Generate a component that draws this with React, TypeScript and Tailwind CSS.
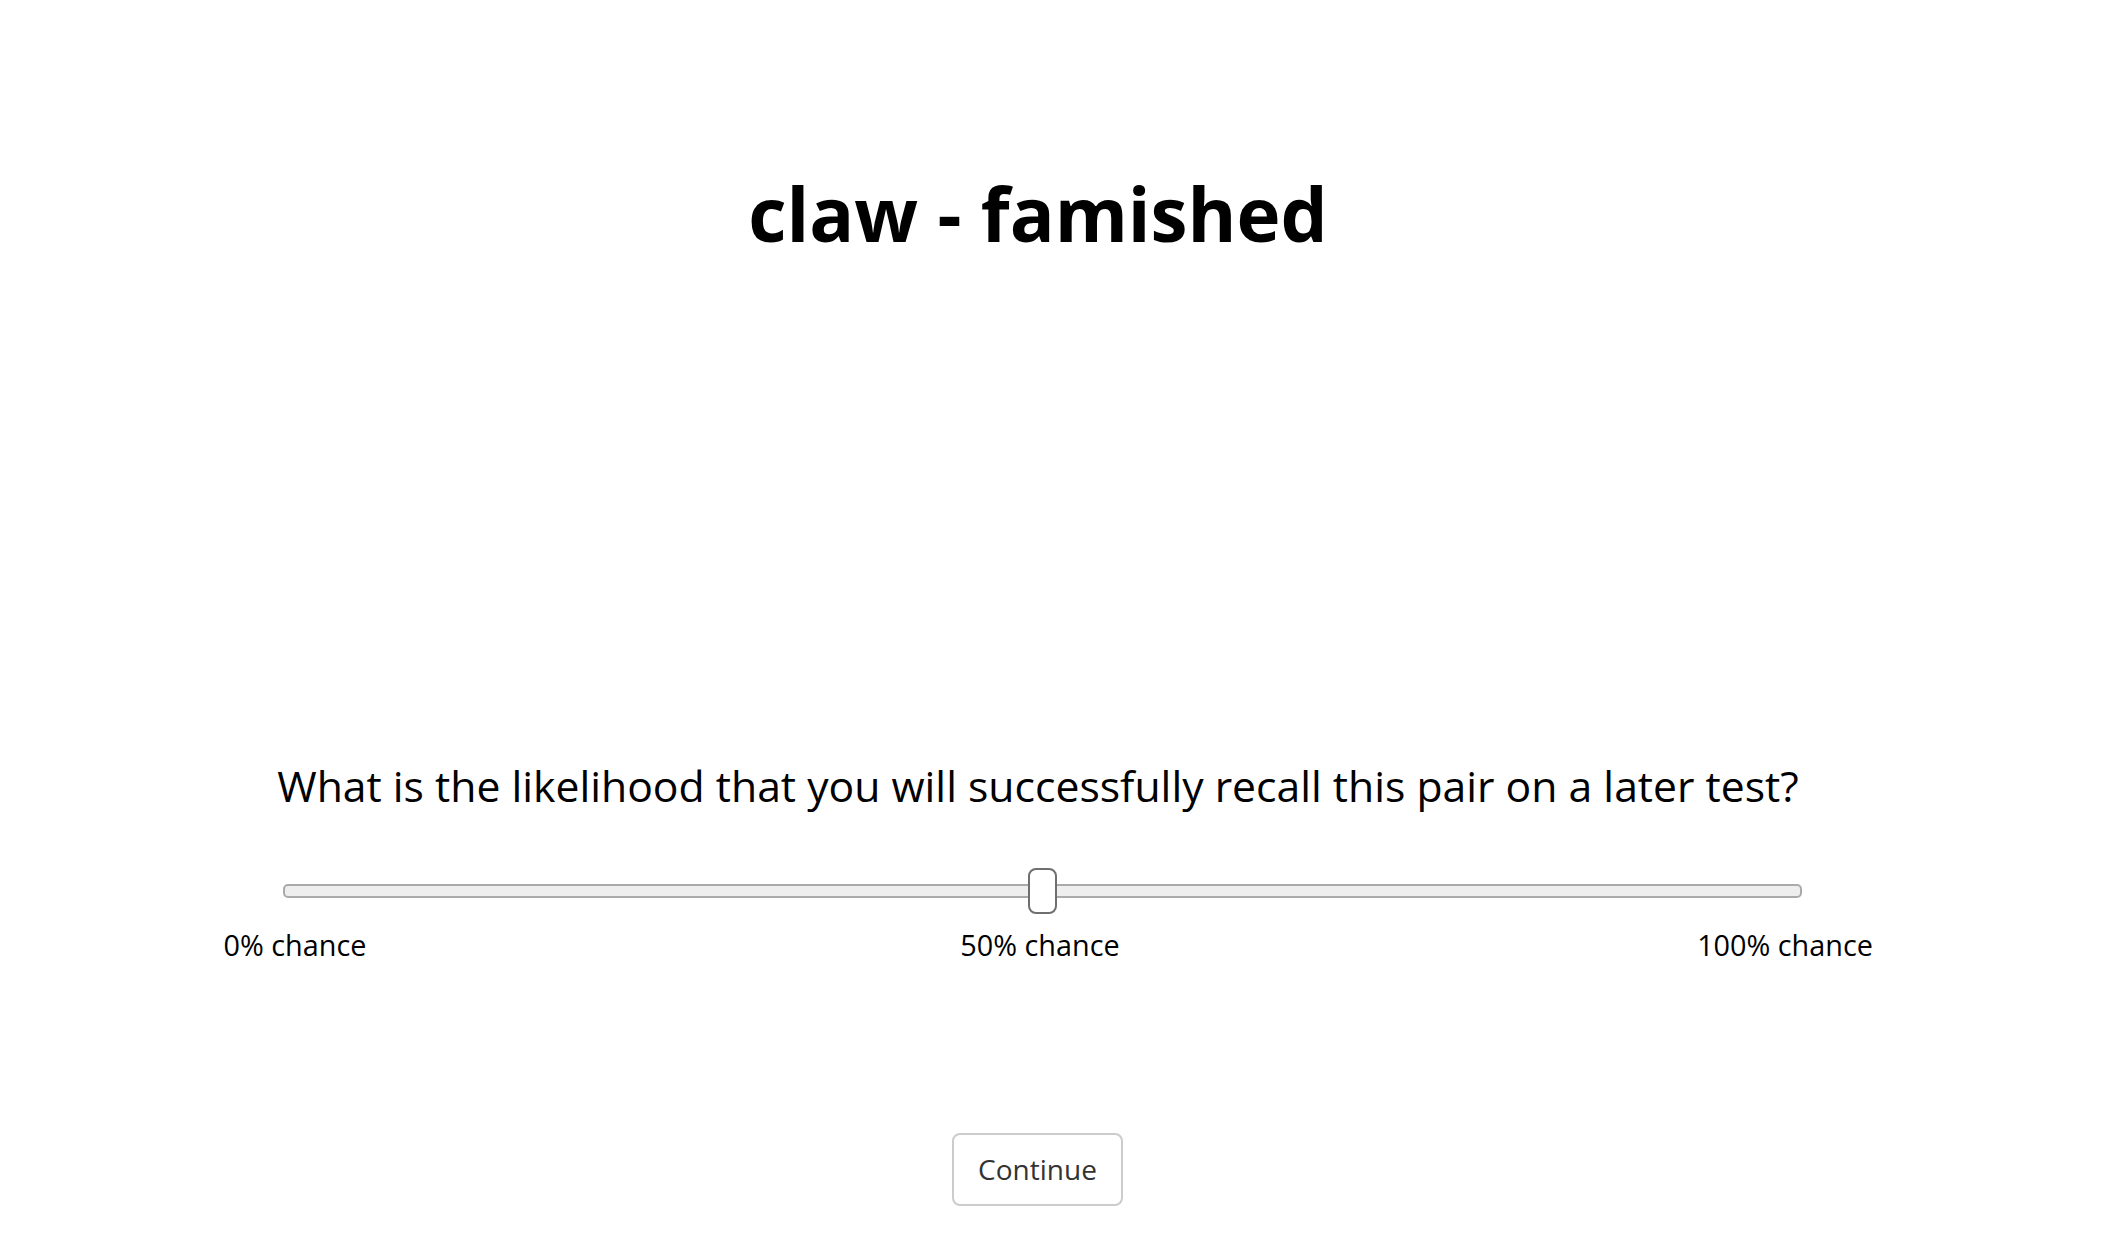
export default function App() {
  return (
    <div className="min-h-screen w-full bg-white font-['Open_Sans','Noto_Sans',sans-serif] text-black">
      <div className="flex flex-col items-center pr-[42px]">
        <h1 className="mt-[176px] mr-[8px] text-[74.5px] font-bold leading-none whitespace-nowrap">claw - famished</h1>
        <p className="mt-[514px] mr-[8px] text-[42.7px] leading-none whitespace-nowrap">
          What is the likelihood that you will successfully recall this pair on a later test?
        </p>
        <div className="mt-[61px] relative flex h-[46px] w-[1519px] items-center">
          <div className="h-[14px] w-full rounded-[5px] border-2 border-[#aaaaaa] bg-[#eeeeee]" />
          <div className="absolute left-[745px] top-0 h-[46px] w-[29px] rounded-[8px] border-2 border-[#6f6f6f] bg-white" />
        </div>
        <div className="mt-[17px] mr-[4px] flex w-[1490px] justify-between text-[28.8px] leading-none">
          <div className="flex w-0 justify-center whitespace-nowrap">0% chance</div>
          <div className="flex w-0 justify-center whitespace-nowrap">50% chance</div>
          <div className="flex w-0 justify-center whitespace-nowrap">100% chance</div>
        </div>
        <button className="mt-[173px] mr-[9px] rounded-[8px] border-2 border-[#cccccc] bg-white px-[24px] py-[12px] text-[28px] leading-[44.8px] text-[#333333]">
          Continue
        </button>
      </div>
    </div>
  );
}
